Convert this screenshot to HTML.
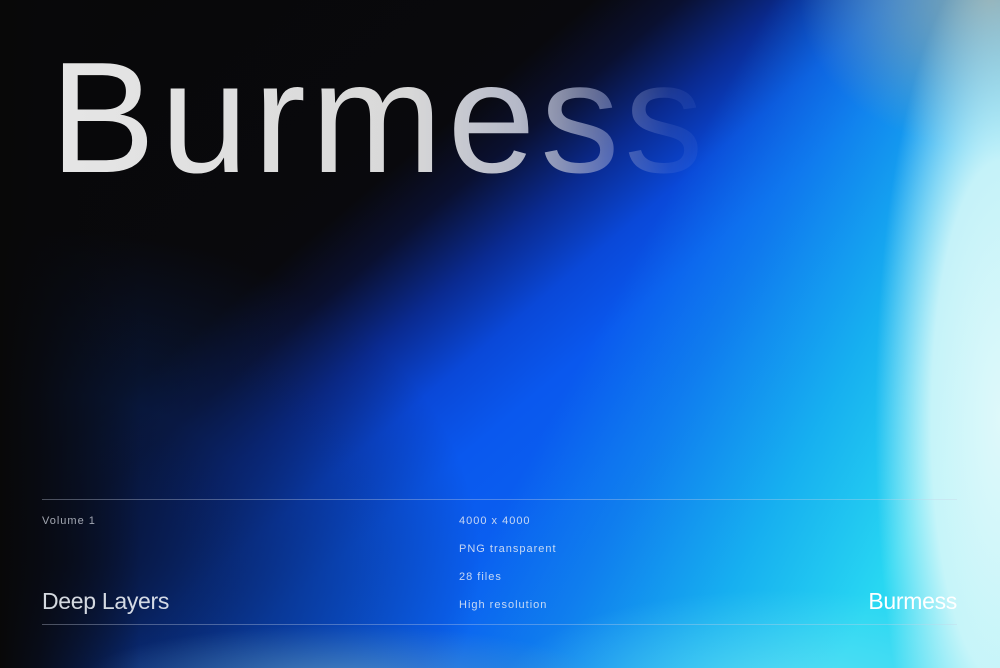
<!DOCTYPE html>
<html><head><meta charset="utf-8"><style>
html,body{margin:0;padding:0}
body{width:1000px;height:668px;overflow:hidden;position:relative;font-family:"Liberation Sans",sans-serif;
background:
radial-gradient(ellipse 125px 470px at 1000px 420px, rgba(228,250,250,0.97) 0%, rgba(215,248,250,0.9) 55%, rgba(190,240,250,0) 100%),
radial-gradient(ellipse 190px 150px at 990px 0px, rgba(140,165,170,0.95), rgba(140,165,170,0.5) 50%, rgba(140,165,170,0) 100%),
linear-gradient(90deg, rgba(8,8,8,1) 0px, rgba(8,8,10,0.8) 40px, rgba(8,8,10,0) 140px),
radial-gradient(ellipse 260px 55px at 340px 680px, rgba(110,165,185,0.6), rgba(80,140,170,0) 100%),
radial-gradient(ellipse 420px 330px at 60px 560px, rgba(8,18,45,0.95), rgba(8,30,80,0.6) 50%, rgba(8,40,110,0) 100%),
radial-gradient(ellipse 280px 100px at 780px 690px, rgba(120,230,245,0.6), rgba(80,220,240,0) 100%),
linear-gradient(118deg, rgba(20,160,240,0) 57%, rgba(20,150,238,0.55) 66%, rgba(24,184,240,0.9) 77%, rgba(40,215,242,1) 88%),
linear-gradient(140deg,#080808 0%,#09090d 33%,#0a1030 38%,#0a2a90 44%,#0a48d8 50%,#0a58ee 56%,#0a60f0 65%,#0a66e8 100%);
}
.big{position:absolute;left:50px;top:18px;font-size:158px;letter-spacing:5px;line-height:200px;white-space:nowrap;width:720px;
background:linear-gradient(90deg,#e6e6e6 0px,#d8d8d8 360px,#b4b8c8 470px,rgba(160,170,215,0.5) 560px,rgba(140,160,230,0.15) 620px,rgba(120,140,220,0) 690px);
-webkit-background-clip:text;background-clip:text;color:transparent}
.line{position:absolute;left:42px;width:915px;height:1px;background:rgba(200,210,230,0.35)}
.s{position:absolute;font-size:11px;letter-spacing:1px;color:rgba(230,235,245,0.85)}
.m{position:absolute;font-size:23px;color:rgba(235,240,245,0.9);letter-spacing:-0.3px}
</style></head><body>
<div class="big">Burmess</div>
<div class="line" style="top:499px"></div>
<div class="line" style="top:624px"></div>
<div class="s" style="left:42px;top:515px;color:rgba(200,205,215,0.8)">Volume 1</div>
<div class="s" style="left:459px;top:515px">4000 x 4000</div>
<div class="s" style="left:459px;top:543px">PNG transparent</div>
<div class="s" style="left:459px;top:571px">28 files</div>
<div class="s" style="left:459px;top:599px">High resolution</div>
<div class="m" style="left:42px;top:588px">Deep Layers</div>
<div class="m" style="right:43px;top:588px;color:#fff">Burmess</div>
</body></html>
